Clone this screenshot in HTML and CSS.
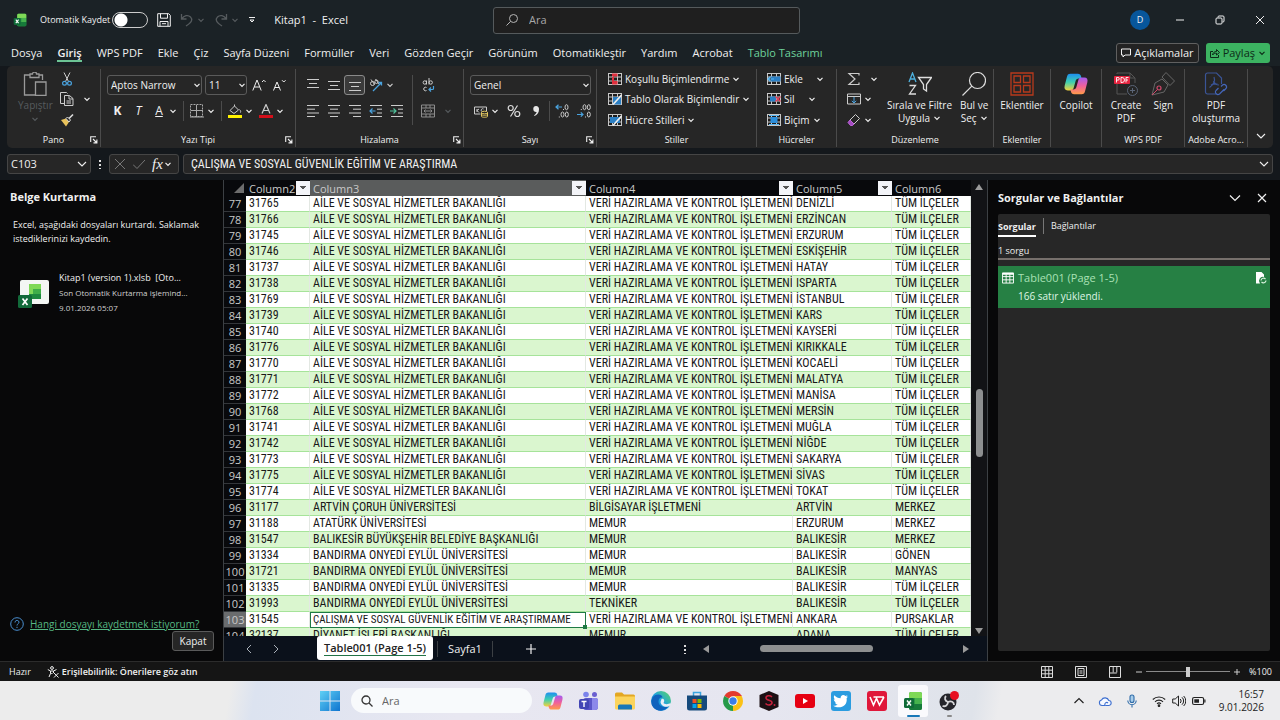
FILE: index.html
```html
<!DOCTYPE html>
<html lang="tr">
<head>
<meta charset="utf-8">
<title>Kitap1 - Excel</title>
<meta name="viewport" content="width=device-width, initial-scale=1">
<link rel="stylesheet" href="styles.css">
</head>
<body>
<svg class="defs" aria-hidden="true">
  <defs>
    <linearGradient id="cpA" x1="0" y1="0" x2="0" y2="1"><stop offset="0" stop-color="#1e8ff0"/><stop offset=".5" stop-color="#3ecfb0"/><stop offset="1" stop-color="#f3d33c"/></linearGradient>
    <linearGradient id="cpB" x1="0" y1="0" x2="0" y2="1"><stop offset="0" stop-color="#a45cf0"/><stop offset=".5" stop-color="#f0609c"/><stop offset="1" stop-color="#ff9a4a"/></linearGradient>
    <linearGradient id="winG" x1="0" y1="0" x2="1" y2="1"><stop offset="0" stop-color="#5fd0f5"/><stop offset="1" stop-color="#0f74cf"/></linearGradient>
    <linearGradient id="edgeG" x1="0" y1="1" x2="1" y2="0"><stop offset="0" stop-color="#0b5cb8"/><stop offset=".5" stop-color="#1fa3e0"/><stop offset="1" stop-color="#5fd95c"/></linearGradient>
    <symbol id="chev" viewBox="0 0 8 8"><path d="M1.500 2.800 4 5.300 6.500 2.800" fill="none" stroke="currentColor" stroke-width="1.200"/></symbol>
    <symbol id="chev-l" viewBox="0 0 12 12"><path d="M2 4l4 4 4-4" fill="none" stroke="currentColor" stroke-width="1.100"/></symbol>
    <symbol id="launch" viewBox="0 0 8 8"><path d="M.7 6V.7H6M3 3l3.500 3.500M6.900 3.500v3.400H3.500" fill="none" stroke="currentColor" stroke-width="1.100"/></symbol>
    <symbol id="xl" viewBox="0 0 20 20"><rect x="6" y="1" width="13" height="18" rx="2" fill="#2c9a45"/><path d="M8 1h9a2 2 0 0 1 2 2v4H6V3a2 2 0 0 1 2-2z" fill="#7fd957"/><path d="M12 7h7v6h-7z" fill="#46b34d"/><path d="M6 13h13v4a2 2 0 0 1-2 2H8a2 2 0 0 1-2-2z" fill="#177a3a"/><rect x="1" y="7" width="10" height="10" rx="1.500" fill="#0f6b38"/><path d="M4 9.500l4 5M8 9.500l-4 5" stroke="#fff" stroke-width="1.500"/></symbol>
    <symbol id="copilot" viewBox="0 0 26 26"><path d="M7 2h8c2 0 3 1 3.500 3l.5 2h-3c-2 0-3 1-3.500 3l-2 7c-.5 2-1.500 3-3.500 3H4c-3 0-4-2-3.300-5L3 6c.7-3 1.500-4 4-4z" fill="url(#cpA)"/><path d="M19 24h-8c-2 0-3-1-3.500-3L7 19h3c2 0 3-1 3.500-3l2-7c.5-2 1.500-3 3.500-3h3c3 0 4 2 3.300 5L23 20c-.7 3-1.500 4-4 4z" fill="url(#cpB)"/></symbol>
    <symbol id="table3" viewBox="0 0 14 12"><rect x=".5" y=".5" width="13" height="11" fill="#1d1d1d" stroke="#c8c8c8"/><path d="M.5 4h13M.5 8h13M4.500.5v11M9.500.5v11" stroke="#c8c8c8"/></symbol>
    <symbol id="lines-c" viewBox="0 0 14 14"><path d="M1 1.500h12M3 5.200h8M1 9h12M3 12.500h8" stroke="currentColor"/></symbol>
  </defs>
</svg>

<header class="titlebar">
  <div class="title-left">
    <svg class="i14" viewBox="0 0 20 20"><use href="#xl"/></svg>
    <label class="autosave">Otomatik Kaydet <input type="checkbox" role="switch"></label>
    <button class="ib save" aria-label="Kaydet"><svg class="i14" viewBox="0 0 14 14" fill="none" stroke="currentColor"><path d="M.7.7h11l1.600 1.600v11H.7zM3.500.7v4.500h7V.7M3 13.300V8.500h8v4.800M5 10.700h4"/></svg></button>
    <button class="ib dim" aria-label="Geri Al"><svg class="i14" viewBox="0 0 14 14" fill="none" stroke="currentColor" stroke-width="1.300"><path d="M1.500 1v5h5M1.800 5.800C4 2.500 8 1.500 10.500 4s1.500 5-4.500 9"/></svg><svg class="chev"><use href="#chev"/></svg></button>
    <button class="ib dim" aria-label="Yinele"><svg class="i14" viewBox="0 0 14 14" fill="none" stroke="currentColor" stroke-width="1.300"><path d="M12.500 1v5h-5M12.200 5.800C10 2.500 6 1.500 3.500 4s-1.500 5 4.500 9"/></svg><svg class="chev"><use href="#chev"/></svg></button>
    <button class="ib qat" aria-label="Araç çubuğunu özelleştir"><svg class="chev" viewBox="0 0 8 8" fill="none" stroke="currentColor"><path d="M1 1.500h6M2 4l2 2 2-2z"/></svg></button>
    <span class="doc">Kitap1&nbsp; -&nbsp; Excel</span>
  </div>
  <label class="search"><svg class="i14" viewBox="0 0 14 14" fill="none" stroke="currentColor"><circle cx="8.500" cy="5.500" r="4"/><path d="M5.500 8.500 1.500 12.500"/></svg><input type="text" placeholder="Ara" aria-label="Ara"></label>
  <div class="title-right">
    <button class="avatar">D</button>
    <button class="win" aria-label="Simge durumuna küçült"><svg class="i10" viewBox="0 0 10 10"><path d="M1 5h8" stroke="currentColor"/></svg></button>
    <button class="win" aria-label="Önceki boyut"><svg class="i10" viewBox="0 0 10 10" fill="none" stroke="currentColor"><rect x="1" y="3" width="6" height="6" rx="1"/><path d="M3 2.500V2a1 1 0 0 1 1-1h4a1 1 0 0 1 1 1v4a1 1 0 0 1-1 1h-.5"/></svg></button>
    <button class="win" aria-label="Kapat"><svg class="i10" viewBox="0 0 10 10"><path d="M1 1l8 8M9 1 1 9" stroke="currentColor"/></svg></button>
  </div>
</header>

<nav class="tabs">
  <button>Dosya</button><button class="on">Giriş</button><button>WPS PDF</button><button>Ekle</button><button>Çiz</button><button>Sayfa Düzeni</button><button>Formüller</button><button>Veri</button><button>Gözden Geçir</button><button>Görünüm</button><button>Otomatikleştir</button><button>Yardım</button><button>Acrobat</button><button class="ctx">Tablo Tasarımı</button>
  <span class="grow"></span>
  <button class="comments"><svg class="i10" viewBox="0 0 10 10" fill="none" stroke="currentColor"><path d="M.5 1h9v6H4L2 9V7H.5z"/></svg>Açıklamalar</button>
  <button class="share"><svg class="i10" viewBox="0 0 10 10" fill="none" stroke="currentColor"><path d="M3 3.500H.5v6h8V7M2.500 7C3 4.500 4.500 3.500 6.500 3.500V1.500L9.500 4.500 6.500 7V5.200C5 5.200 3.500 5.500 2.500 7z"/></svg>Paylaş<svg class="chev"><use href="#chev"/></svg></button>
</nav>

<section class="ribbon" aria-label="Şerit">
  <div class="group">
    <div class="body clip">
      <button class="big dim"><svg class="i24" viewBox="0 0 24 24" fill="none" stroke="#9a9a9a" stroke-width="1.300"><path d="M7 3H1.500v20H12M16 3h3.500v5M7 5.500V2h2.500a2 2 0 0 1 4 0H16v3.500zM12.500 10h10.500v13.500H12.500z"/></svg><span>Yapıştır</span><svg class="chev"><use href="#chev"/></svg></button>
      <div class="rows3">
        <button class="ib" aria-label="Kes"><svg class="i14" viewBox="0 0 14 14" fill="none"><path d="M4 .5l4.500 9M10 .5l-4.500 9" stroke="#ccc"/><circle cx="4.500" cy="11.200" r="1.900" stroke="#4aa3df" stroke-width="1.200"/><circle cx="9.500" cy="11.200" r="1.900" stroke="#4aa3df" stroke-width="1.200"/></svg></button>
        <button class="ib" aria-label="Kopyala"><svg class="i14" viewBox="0 0 14 14" fill="none" stroke="#ccc"><path d="M4.500 11.500h-4V.5h6l1 1M4.500 3.500h5L13 6.500v7H4.500zM9 3.500v3.500h4M6.500 9h4.500M6.500 11h4.500"/></svg><svg class="chev gap6"><use href="#chev"/></svg></button>
        <button class="ib" aria-label="Biçim Boyacısı"><svg class="i14" viewBox="0 0 14 14"><path d="M1 7l5-1.500L9 9l-3 4.500z" fill="#e8c25c"/><path d="M6 5.500 7.500 4 10.500 7 9 9z" fill="#262626" stroke="#ddd"/><path d="M9 5.500 13 1.500" stroke="#ddd" stroke-width="1.600"/></svg></button>
      </div>
    </div>
    <div class="cap"><span>Pano</span><button aria-label="Pano ayarları"><svg class="chev"><use href="#launch"/></svg></button></div>
  </div>

  <div class="group">
    <div class="body rows2">
      <div class="line">
        <span class="sel w94"><select aria-label="Yazı tipi"><option>Aptos Narrow</option></select><svg class="chev"><use href="#chev"/></svg></span>
        <span class="sel w42"><select aria-label="Yazı boyutu"><option>11</option></select><svg class="chev"><use href="#chev"/></svg></span>
        <button class="ib ml" aria-label="Yazı tipini büyüt"><svg class="i14" viewBox="0 0 14 14" fill="none" stroke="currentColor"><path d="M.8 12.500 5 2l4.200 10.500M2.300 9h5.400M10 4l1.800-1.800L13.600 4"/></svg></button>
        <button class="ib ml" aria-label="Yazı tipini küçült"><svg class="i14" viewBox="0 0 14 14" fill="none" stroke="currentColor"><path d="M1.500 12.500 5 4l3.500 8.500M2.800 9.500h4.400M10 2.200 11.800 4l1.800-1.800"/></svg></button>
      </div>
      <div class="line fmt">
        <button class="ib b" aria-label="Kalın">K</button><button class="ib it" aria-label="İtalik">T</button>
        <button class="ib"><span class="u">A</span><svg class="chev"><use href="#chev"/></svg></button><i class="sep"></i>
        <button class="ib" aria-label="Kenarlıklar"><svg class="i14" viewBox="0 0 14 14" fill="none" stroke="#aaa"><rect x=".5" y=".5" width="12" height="12" stroke-dasharray="2 1"/><path d="M6.500 1v12M1 6.500h12M0 13h14"/></svg><svg class="chev"><use href="#chev"/></svg></button><i class="sep"></i>
        <button class="ib" aria-label="Dolgu rengi"><svg class="i14" viewBox="0 0 14 14"><path d="M2 6.500 6.500 2l4 4L6 9.500zM6.500 2V.5M11.500 5.500c1.500 1.500 1.500 3 .5 3" fill="none" stroke="#ccc"/><path d="M0 11h14v3H0z" fill="#fff200"/></svg><svg class="chev"><use href="#chev"/></svg></button>
        <button class="ib" aria-label="Yazı rengi"><svg class="i14" viewBox="0 0 14 14"><path d="M3 9.500 7 .5l4 9M4.300 6.500h5.400" fill="none" stroke="#ccc" stroke-width="1.200"/><path d="M0 11h14v3H0z" fill="#d40f1a"/></svg><svg class="chev"><use href="#chev"/></svg></button>
      </div>
    </div>
    <div class="cap"><span>Yazı Tipi</span><button aria-label="Yazı tipi ayarları"><svg class="chev"><use href="#launch"/></svg></button></div>
  </div>

  <div class="group">
    <div class="body halign">
      <div class="rows2">
        <div class="line al">
          <button class="ib" aria-label="Üste hizala"><svg class="i14" viewBox="0 0 14 14"><path d="M1 1.500h12M3 5.500h8M1 9.500h12" stroke="#ccc"/></svg></button>
          <button class="ib" aria-label="Ortaya hizala"><svg class="i14" viewBox="0 0 14 14"><path d="M1 3.500h12M3 7.500h8M1 11.500h12" stroke="#ccc"/></svg></button>
          <button class="ib pressed" aria-label="Alta hizala"><svg class="i14" viewBox="0 0 14 14"><path d="M1 4.500h12M3 8.500h8M1 12.500h12" stroke="#ccc"/></svg></button>
          <button class="ib" aria-label="Yönlendirme"><svg class="i14" viewBox="0 0 14 14" fill="none"><circle cx="3.500" cy="5.500" r="2" stroke="#ccc"/><path d="M2 1.500l3.500 5M6.500 1 10 6" stroke="#ccc"/><circle cx="7.500" cy="3.800" r="1.700" stroke="#ccc"/><path d="M4 13 12.500 4.500M9.500 4.500h3v3" stroke="#4aa3df" stroke-width="1.300"/></svg><svg class="chev"><use href="#chev"/></svg></button>
        </div>
        <div class="line al">
          <button class="ib" aria-label="Sola hizala"><svg class="i14" viewBox="0 0 14 14"><path d="M1 1.500h12M1 5.200h8M1 9h12M1 12.500h8" stroke="#ccc"/></svg></button>
          <button class="ib" aria-label="Ortala"><svg class="i14"><use href="#lines-c"/></svg></button>
          <button class="ib" aria-label="Sağa hizala"><svg class="i14" viewBox="0 0 14 14"><path d="M1 1.500h12M5 5.200h8M1 9h12M5 12.500h8" stroke="#ccc"/></svg></button>
          <button class="ib" aria-label="Girintiyi azalt"><svg class="i14" viewBox="0 0 14 14" fill="none"><path d="M1 1.500h12M8 5.200h5M8 9h5M1 12.500h12" stroke="#ccc"/><path d="M6.500 7H1M3.500 4.500 1 7l2.500 2.500" stroke="#4aa3df" stroke-width="1.200"/></svg></button>
          <button class="ib" aria-label="Girintiyi artır"><svg class="i14" viewBox="0 0 14 14" fill="none"><path d="M1 1.500h12M8 5.200h5M8 9h5M1 12.500h12" stroke="#ccc"/><path d="M0 7h6M3.500 4.500 6 7 3.500 9.500" stroke="#4fc09a" stroke-width="1.200"/></svg></button>
        </div>
      </div>
      <i class="sep tall"></i>
      <div class="rows2">
        <button class="ib" aria-label="Metni kaydır"><svg class="i14" viewBox="0 0 14 14" fill="none" stroke="#ccc"><circle cx="3.800" cy="4.500" r="1.700"/><path d="M5.500 2.500v4M8 0v6.500"/><circle cx="9.700" cy="4.500" r="1.700"/><path d="M5.500 9.500a1.800 1.800 0 1 0 0 3"/><path d="M12.500 8v2.500a1 1 0 0 1-1 1H8M10 9.500l-2 2 2 2" stroke="#4aa3df" stroke-width="1.200"/></svg></button>
        <button class="ib" aria-label="Birleştir ve ortala"><svg class="i14" viewBox="0 0 14 14" fill="none" stroke="#8c8c8c"><path d="M.5 1h13v12H.5zM.5 4h13M.5 10h13M5 1v3M9 1v3M5 10v3M9 10v3M3 7h8M4.500 5.500 3 7l1.500 1.500M9.500 5.500 11 7 9.500 8.500"/></svg><svg class="chev dim gap6"><use href="#chev"/></svg></button>
      </div>
    </div>
    <div class="cap"><span>Hizalama</span><button aria-label="Hizalama ayarları"><svg class="chev"><use href="#launch"/></svg></button></div>
  </div>

  <div class="group">
    <div class="body rows2">
      <div class="line"><span class="sel wide"><select aria-label="Sayı biçimi"><option>Genel</option></select><svg class="chev"><use href="#chev"/></svg></span></div>
      <div class="line num">
        <button class="ib" aria-label="Muhasebe biçimi"><svg class="i14" viewBox="0 0 14 14" fill="none"><path d="M.5 3h12v4M.5 3v7h6M3 5v3M3 6.500 5 5M3 6.500 5 8.500M9.500 5a1.500 1.500 0 1 0 0 2.500" stroke="#ccc"/><ellipse cx="10.500" cy="8.500" rx="3" ry="1.300" fill="#262626" stroke="#e3c860"/><path d="M7.500 8.500v4c0 1 6 1 6 0v-4M7.500 10.500c0 1 6 1 6 0" stroke="#e3c860"/></svg><svg class="chev"><use href="#chev"/></svg></button>
        <button class="ib" aria-label="Yüzde"><svg class="i14" viewBox="0 0 14 14" fill="none" stroke="#ddd" stroke-width="1.200"><circle cx="3.700" cy="4" r="2.500"/><circle cx="10.300" cy="10" r="2.500"/><path d="M10.500 1.500l-7 11"/></svg></button>
        <button class="ib" aria-label="Binlik ayırıcı"><svg class="i14" viewBox="0 0 14 14"><path d="M7 2a3 3 0 0 1 3 3.500c0 3-1.800 5.500-4.500 6.500l-.4-.8C6.700 10.200 7.500 9 7.600 8A3 3 0 1 1 7 2z" fill="#e6e6e6"/></svg></button><i class="sep"></i>
        <button class="ib" aria-label="Ondalık artır"><svg class="i14" viewBox="0 0 14 14" fill="none" stroke="#ccc"><ellipse cx="11.500" cy="3.200" rx="1.500" ry="2.500"/><ellipse cx="7.500" cy="10.500" rx="1.500" ry="2.500"/><ellipse cx="11.800" cy="10.500" rx="1.500" ry="2.500"/><path d="M4.300 12.500v1M8.500 5v1"/><path d="M7 3H1M3.500.8 1 3l2.500 2.200" stroke="#4aa3df" stroke-width="1.200"/></svg></button>
        <button class="ib" aria-label="Ondalık azalt"><svg class="i14" viewBox="0 0 14 14" fill="none" stroke="#ccc"><ellipse cx="7.500" cy="3.200" rx="1.500" ry="2.500"/><ellipse cx="11.800" cy="3.200" rx="1.500" ry="2.500"/><ellipse cx="11.800" cy="10.500" rx="1.500" ry="2.500"/><path d="M4.300 5v1M8.500 12.500v1"/><path d="M0 10.500h6M3.800 8.300 6 10.500 3.800 12.700" stroke="#4aa3df" stroke-width="1.200"/></svg></button>
      </div>
    </div>
    <div class="cap"><span>Sayı</span><button aria-label="Sayı ayarları"><svg class="chev"><use href="#launch"/></svg></button></div>
  </div>

  <div class="group">
    <div class="body rows3 pad11">
      <button class="row"><svg class="i14" viewBox="0 0 14 12"><use href="#table3"/><path d="M4 .5h5.500v3H4zM4 8h5.500v3.500H4zM4 4h2v4H4z" fill="#e0303e"/></svg>Koşullu Biçimlendirme<svg class="chev"><use href="#chev"/></svg></button>
      <button class="row"><svg class="i14" viewBox="0 0 14 12"><use href="#table3"/><path d="M5 4h8v7.500H5z" fill="#2b7fc4"/><path d="M5 11.500 13.500 2" stroke="#eee" stroke-width="1.600"/></svg>Tablo Olarak Biçimlendir<svg class="chev"><use href="#chev"/></svg></button>
      <button class="row"><svg class="i14" viewBox="0 0 14 12"><use href="#table3"/><path d="M2 3h10v6H2z" fill="#2b7fc4"/><path d="M5 11.500 13.500 2" stroke="#eee" stroke-width="1.600"/></svg>Hücre Stilleri<svg class="chev"><use href="#chev"/></svg></button>
    </div>
    <div class="cap"><span>Stiller</span></div>
  </div>

  <div class="group">
    <div class="body rows3 pad10">
      <button class="row"><svg class="i14" viewBox="0 0 14 12"><use href="#table3"/><path d="M4 3.500h9.500v5H4z" fill="#2b7fc4"/><path d="M7 6H1M3.500 3.500 1 6l2.500 2.500" fill="none" stroke="#5db9f5" stroke-width="1.200"/></svg>Ekle<svg class="chev gap10"><use href="#chev"/></svg></button>
      <button class="row"><svg class="i14" viewBox="0 0 14 12"><use href="#table3"/><path d="M3 3.500h6v5H3z" fill="#2b7fc4"/><path d="M8.500 3.500l5 5M13.500 3.500l-5 5" stroke="#e0405a" stroke-width="1.500"/></svg>Sil<svg class="chev gap10"><use href="#chev"/></svg></button>
      <button class="row"><svg class="i14" viewBox="0 0 14 12"><use href="#table3"/><path d="M3.500 3h7v6h-7z" fill="#2b8fdc"/><path d="M2 1.500h10M2 10.500h10" stroke="#5db9f5"/></svg>Biçim<svg class="chev"><use href="#chev"/></svg></button>
    </div>
    <div class="cap"><span>Hücreler</span></div>
  </div>

  <div class="group">
    <div class="body edit">
      <div class="rows3">
        <button class="ib" aria-label="Otomatik Toplam"><svg class="i14" viewBox="0 0 14 14" fill="none" stroke="#ccc" stroke-width="1.200"><path d="M12 3.500V1.500H2L8 7l-6 5.500h10v-2"/></svg><svg class="chev gap6"><use href="#chev"/></svg></button>
        <button class="ib" aria-label="Doldur"><svg class="i14" viewBox="0 0 14 14" fill="none" stroke="#ccc"><path d="M.5 2h13v10H.5zM.5 4.500h13"/><path d="M7 5v6M4.800 8.800 7 11l2.200-2.200" stroke="#4aa3df"/></svg><svg class="chev"><use href="#chev"/></svg></button>
        <button class="ib" aria-label="Temizle"><svg class="i14" viewBox="0 0 14 14" fill="none"><path d="M8.500 1.500 12.500 5.500 7 11 3 7z" stroke="#ccc"/><path d="M3 7l4 4-1.500 1.500h-2L1 9.500z" fill="#a34bc0" stroke="#c065dc"/></svg><svg class="chev"><use href="#chev"/></svg></button>
      </div>
      <button class="big"><svg class="i24" viewBox="0 0 24 24" fill="none"><path d="M1 10 4.500 1 8 10M2.200 7h4.600" stroke="#4db0dd" stroke-width="1.300"/><path d="M1.500 13.500h6L1.500 22h6.500M10.500 5.500h13l-5 7v6.500L15.500 17v-4.500z" stroke="#ddd" stroke-width="1.300"/></svg><span>Sırala ve Filtre<br>Uygula<svg class="chev"><use href="#chev"/></svg></span></button>
      <button class="big"><svg class="i24" viewBox="0 0 24 24" fill="none" stroke="#ddd" stroke-width="1.200"><circle cx="15.500" cy="8.500" r="8"/><path d="M9.800 14.200.5 23.500"/></svg><span>Bul ve<br>Seç<svg class="chev"><use href="#chev"/></svg></span></button>
    </div>
    <div class="cap"><span>Düzenleme</span></div>
  </div>

  <div class="group">
    <div class="body center"><button class="big"><svg class="i24" viewBox="0 0 24 24" fill="none" stroke="#b83a1c" stroke-width="1.300"><path d="M1 1h22v22H1zM4 4h6.500v6.500H4zM13.500 4H20v6.500h-6.500zM4 13.500h6.500V20H4zM13.500 13.500H20V20h-6.500z"/></svg><span>Eklentiler</span></button></div>
    <div class="cap"><span>Eklentiler</span></div>
  </div>

  <div class="group">
    <div class="body center"><button class="big"><svg class="i24" viewBox="0 0 26 26"><use href="#copilot"/></svg><span>Copilot</span></button></div>
    <div class="cap"></div>
  </div>

  <div class="group">
    <div class="body center">
      <button class="big"><svg class="i24" viewBox="0 0 24 24" fill="none"><path d="M3 2V1h13l5 5v5M3 12v10h10M16 1v5h5" stroke="#555"/><circle cx="18.500" cy="18.500" r="5" stroke="#5a6577"/><path d="M18.500 16v5M16 18.500h5" stroke="#5a6577"/><rect x="0" y="4" width="16" height="8" rx="1" fill="#e5243f"/><path d="M2.500 10.500v-5h1.500a1.300 1.300 0 0 1 0 2.600H2.500M7 5.500v5h1a2 2 0 0 0 0-5zM12 10.500v-5h2.500M12 8h2" stroke="#fff" stroke-width=".9"/></svg><span>Create<br>PDF</span></button>
      <button class="big"><svg class="i24" viewBox="0 0 24 24" fill="none" stroke="#666"><path d="M1 23 4 11l7-4 6 6-4 7zM11 5l4-4.500L23.500 9 19 13.500zM1 23l6-6"/><circle cx="8" cy="16" r="2" stroke="#d0486a" stroke-width="1.200"/><path d="M6.500 17.500 1 23" stroke="#d0486a"/></svg><span>Sign</span></button>
    </div>
    <div class="cap"><span>WPS PDF</span></div>
  </div>

  <div class="group">
    <div class="body center"><button class="big"><svg class="i24" viewBox="0 0 24 24" fill="none" stroke="#3a5496" stroke-width="1.200"><path d="M12 22H3.500a2 2 0 0 1-2-2V3a2 2 0 0 1 2-2h9l5 5v6M10 5c1.500 4-1 8-4.500 10.500M9.500 9c1 2.500 3 4 5.500 4M7 13c2-1 4-1.500 6.500-1"/><path d="M17 14.500l1.500-1.500a2.500 2.500 0 0 1 3.500 3.500L19.500 19M20 17.500l-4.500 4.500a2.500 2.500 0 0 1-3.500-3.500l2.500-2.500" stroke="#4466ba"/></svg><span>PDF<br>oluşturma</span></button></div>
    <div class="cap"><span>Adobe Acro...</span></div>
  </div>
  <div class="collapse"><button class="ib" aria-label="Şeridi daralt"><svg class="i12"><use href="#chev-l"/></svg></button></div>
</section>

<section class="formula">
  <label class="namebox"><input type="text" value="C103" aria-label="Ad kutusu"><svg class="i12"><use href="#chev-l"/></svg></label>
  <span class="dots" aria-hidden="true"></span>
  <div class="fxbox">
    <button class="ib" aria-label="İptal"><svg class="i12" viewBox="0 0 12 12"><path d="M1 1l10 10M11 1 1 11" stroke="#777"/></svg></button>
    <button class="ib" aria-label="Gir"><svg class="i12" viewBox="0 0 12 12"><path d="M0 6.500 4 10.500 12 2" fill="none" stroke="#777"/></svg></button>
    <button class="ib fx">fx<svg class="chev"><use href="#chev"/></svg></button>
  </div>
  <label class="fin"><input type="text" aria-label="Formül çubuğu" value="ÇALIŞMA VE SOSYAL GÜVENLİK EĞİTİM VE ARAŞTIRMA"><svg class="i12"><use href="#chev-l"/></svg></label>
</section>

<main class="work">
  <aside class="recovery">
    <h2>Belge Kurtarma</h2>
    <p>Excel, aşağıdaki dosyaları kurtardı. Saklamak istediklerinizi kaydedin.</p>
    <div class="file">
      <svg class="i32" viewBox="0 0 32 32"><rect x="2" y="3" width="29" height="24" rx="2" fill="#f4f6f4"/><rect x="11" y="7" width="12" height="15" rx="1" fill="#3fae49"/><path d="M11 7h12v5h-8v5h-4z" fill="#7fd957"/><path d="M11 17h12v5H11z" fill="#1e8a3f"/><rect x="0" y="18" width="14" height="13" rx="1.500" fill="#126a3a"/><path d="M4.500 21.500l5 6.500M9.500 21.500l-5 6.500" stroke="#fff" stroke-width="1.700"/></svg>
      <div><div class="fn">Kitap1 (version 1).xlsb&nbsp; [Oto...</div><div class="fs">Son Otomatik Kurtarma işlemind...</div><div class="fs">9.01.2026 05:07</div></div>
    </div>
    <div class="grow"></div>
    <div class="which"><svg class="i14" viewBox="0 0 14 14" fill="none" stroke="#4a8fd0"><circle cx="7" cy="7" r="6.300"/><path d="M5 5.500c0-3 4-2.500 4-.3C9 6.800 7 6.800 7 8.500M7 9.800v1.200"/></svg><a href="#">Hangi dosyayı kaydetmek istiyorum?</a></div>
    <button class="closebtn">Kapat</button>
  </aside>

  <section class="sheet">
    <div class="gridwrap">
      <div class="cells">
      <table>
        <colgroup><col class="c0"><col class="c2"><col class="c3"><col class="c4"><col class="c5"><col></colgroup>
        <thead><tr><th class="corner"><svg viewBox="0 0 10 10"><path d="M10 0v10H0z" fill="#6d6d6d"/></svg></th><th><div>Column2<button aria-label="Filtre"></button></div></th><th class="cur"><div>Column3<button aria-label="Filtre"></button></div></th><th><div>Column4<button aria-label="Filtre"></button></div></th><th><div>Column5<button aria-label="Filtre"></button></div></th><th><div>Column6</div></th></tr></thead>
        <tbody>
<tr><th>77</th><td>31765</td><td>AİLE VE SOSYAL HİZMETLER BAKANLIĞI</td><td>VERİ HAZIRLAMA VE KONTROL İŞLETMENİ</td><td>DENİZLİ</td><td>TÜM İLÇELER</td></tr>
<tr><th>78</th><td>31766</td><td>AİLE VE SOSYAL HİZMETLER BAKANLIĞI</td><td>VERİ HAZIRLAMA VE KONTROL İŞLETMENİ</td><td>ERZİNCAN</td><td>TÜM İLÇELER</td></tr>
<tr><th>79</th><td>31745</td><td>AİLE VE SOSYAL HİZMETLER BAKANLIĞI</td><td>VERİ HAZIRLAMA VE KONTROL İŞLETMENİ</td><td>ERZURUM</td><td>TÜM İLÇELER</td></tr>
<tr><th>80</th><td>31746</td><td>AİLE VE SOSYAL HİZMETLER BAKANLIĞI</td><td>VERİ HAZIRLAMA VE KONTROL İŞLETMENİ</td><td>ESKİŞEHİR</td><td>TÜM İLÇELER</td></tr>
<tr><th>81</th><td>31737</td><td>AİLE VE SOSYAL HİZMETLER BAKANLIĞI</td><td>VERİ HAZIRLAMA VE KONTROL İŞLETMENİ</td><td>HATAY</td><td>TÜM İLÇELER</td></tr>
<tr><th>82</th><td>31738</td><td>AİLE VE SOSYAL HİZMETLER BAKANLIĞI</td><td>VERİ HAZIRLAMA VE KONTROL İŞLETMENİ</td><td>ISPARTA</td><td>TÜM İLÇELER</td></tr>
<tr><th>83</th><td>31769</td><td>AİLE VE SOSYAL HİZMETLER BAKANLIĞI</td><td>VERİ HAZIRLAMA VE KONTROL İŞLETMENİ</td><td>İSTANBUL</td><td>TÜM İLÇELER</td></tr>
<tr><th>84</th><td>31739</td><td>AİLE VE SOSYAL HİZMETLER BAKANLIĞI</td><td>VERİ HAZIRLAMA VE KONTROL İŞLETMENİ</td><td>KARS</td><td>TÜM İLÇELER</td></tr>
<tr><th>85</th><td>31740</td><td>AİLE VE SOSYAL HİZMETLER BAKANLIĞI</td><td>VERİ HAZIRLAMA VE KONTROL İŞLETMENİ</td><td>KAYSERİ</td><td>TÜM İLÇELER</td></tr>
<tr><th>86</th><td>31776</td><td>AİLE VE SOSYAL HİZMETLER BAKANLIĞI</td><td>VERİ HAZIRLAMA VE KONTROL İŞLETMENİ</td><td>KIRIKKALE</td><td>TÜM İLÇELER</td></tr>
<tr><th>87</th><td>31770</td><td>AİLE VE SOSYAL HİZMETLER BAKANLIĞI</td><td>VERİ HAZIRLAMA VE KONTROL İŞLETMENİ</td><td>KOCAELİ</td><td>TÜM İLÇELER</td></tr>
<tr><th>88</th><td>31771</td><td>AİLE VE SOSYAL HİZMETLER BAKANLIĞI</td><td>VERİ HAZIRLAMA VE KONTROL İŞLETMENİ</td><td>MALATYA</td><td>TÜM İLÇELER</td></tr>
<tr><th>89</th><td>31772</td><td>AİLE VE SOSYAL HİZMETLER BAKANLIĞI</td><td>VERİ HAZIRLAMA VE KONTROL İŞLETMENİ</td><td>MANİSA</td><td>TÜM İLÇELER</td></tr>
<tr><th>90</th><td>31768</td><td>AİLE VE SOSYAL HİZMETLER BAKANLIĞI</td><td>VERİ HAZIRLAMA VE KONTROL İŞLETMENİ</td><td>MERSİN</td><td>TÜM İLÇELER</td></tr>
<tr><th>91</th><td>31741</td><td>AİLE VE SOSYAL HİZMETLER BAKANLIĞI</td><td>VERİ HAZIRLAMA VE KONTROL İŞLETMENİ</td><td>MUĞLA</td><td>TÜM İLÇELER</td></tr>
<tr><th>92</th><td>31742</td><td>AİLE VE SOSYAL HİZMETLER BAKANLIĞI</td><td>VERİ HAZIRLAMA VE KONTROL İŞLETMENİ</td><td>NİĞDE</td><td>TÜM İLÇELER</td></tr>
<tr><th>93</th><td>31773</td><td>AİLE VE SOSYAL HİZMETLER BAKANLIĞI</td><td>VERİ HAZIRLAMA VE KONTROL İŞLETMENİ</td><td>SAKARYA</td><td>TÜM İLÇELER</td></tr>
<tr><th>94</th><td>31775</td><td>AİLE VE SOSYAL HİZMETLER BAKANLIĞI</td><td>VERİ HAZIRLAMA VE KONTROL İŞLETMENİ</td><td>SİVAS</td><td>TÜM İLÇELER</td></tr>
<tr><th>95</th><td>31774</td><td>AİLE VE SOSYAL HİZMETLER BAKANLIĞI</td><td>VERİ HAZIRLAMA VE KONTROL İŞLETMENİ</td><td>TOKAT</td><td>TÜM İLÇELER</td></tr>
<tr><th>96</th><td>31177</td><td>ARTVİN ÇORUH ÜNİVERSİTESİ</td><td>BİLGİSAYAR İŞLETMENİ</td><td>ARTVİN</td><td>MERKEZ</td></tr>
<tr><th>97</th><td>31188</td><td>ATATÜRK ÜNİVERSİTESİ</td><td>MEMUR</td><td>ERZURUM</td><td>MERKEZ</td></tr>
<tr><th>98</th><td>31547</td><td>BALIKESİR BÜYÜKŞEHİR BELEDİYE BAŞKANLIĞI</td><td>MEMUR</td><td>BALIKESİR</td><td>MERKEZ</td></tr>
<tr><th>99</th><td>31334</td><td>BANDIRMA ONYEDİ EYLÜL ÜNİVERSİTESİ</td><td>MEMUR</td><td>BALIKESİR</td><td>GÖNEN</td></tr>
<tr><th>100</th><td>31721</td><td>BANDIRMA ONYEDİ EYLÜL ÜNİVERSİTESİ</td><td>MEMUR</td><td>BALIKESİR</td><td>MANYAS</td></tr>
<tr><th>101</th><td>31335</td><td>BANDIRMA ONYEDİ EYLÜL ÜNİVERSİTESİ</td><td>MEMUR</td><td>BALIKESİR</td><td>TÜM İLÇELER</td></tr>
<tr><th>102</th><td>31993</td><td>BANDIRMA ONYEDİ EYLÜL ÜNİVERSİTESİ</td><td>TEKNİKER</td><td>BALIKESİR</td><td>TÜM İLÇELER</td></tr>
<tr class="active"><th>103</th><td>31545</td><td class="picked">ÇALIŞMA VE SOSYAL GÜVENLİK EĞİTİM VE ARAŞTIRMAME</td><td>VERİ HAZIRLAMA VE KONTROL İŞLETMENİ</td><td>ANKARA</td><td>PURSAKLAR</td></tr>
<tr><th>104</th><td>32137</td><td>DİYANET İŞLERİ BAŞKANLIĞI</td><td>MEMUR</td><td>ADANA</td><td>TÜM İLÇELER</td></tr>
        </tbody>
      </table>
      </div>
      <div class="vbar"><svg viewBox="0 0 8 6"><path d="M4 0l4 6H0z"/></svg><i></i><svg viewBox="0 0 8 6"><path d="M4 6 0 0h8z"/></svg></div>
    </div>
    <div class="sheettabs">
      <button class="nav" aria-label="Önceki sayfa"><svg class="i10" viewBox="0 0 10 10"><path d="M7 1 3 5l4 4" fill="none" stroke="currentColor"/></svg></button>
      <button class="nav" aria-label="Sonraki sayfa"><svg class="i10" viewBox="0 0 10 10"><path d="M3 1l4 4-4 4" fill="none" stroke="currentColor"/></svg></button>
      <button class="st on"><span>Table001 (Page 1-5)</span></button>
      <button class="st">Sayfa1</button>
      <button class="add" aria-label="Yeni sayfa"><svg class="i10" viewBox="0 0 10 10"><path d="M5 0v10M0 5h10" stroke="currentColor" stroke-width="1.200"/></svg></button>
      <span class="grow"></span>
      <span class="dots" aria-hidden="true"></span>
      <div class="hbar"><svg viewBox="0 0 6 8"><path d="M6 0v8L0 4z"/></svg><i></i><svg viewBox="0 0 6 8"><path d="M0 0v8l6-4z"/></svg></div>
    </div>
  </section>

  <aside class="queries">
    <header><h2>Sorgular ve Bağlantılar</h2><button class="ib" aria-label="Bölme seçenekleri"><svg class="i12" viewBox="0 0 12 12"><path d="M1 3.500l5 5 5-5" fill="none" stroke="currentColor" stroke-width="1.200"/></svg></button><button class="ib" aria-label="Bölmeyi kapat"><svg class="i10" viewBox="0 0 10 10"><path d="M1 1l8 8M9 1 1 9" stroke="currentColor" stroke-width="1.200"/></svg></button></header>
    <div class="qpanel">
      <div class="qtabs"><button class="on">Sorgular</button><button>Bağlantılar</button></div>
      <div class="count">1 sorgu</div>
      <div class="query">
        <svg class="i12" viewBox="0 0 13 12" fill="none" stroke="#fff"><path d="M.5.5h12v11H.5zM.5 4.500h12M.5 8h12M4.500 2v9.500M8.500 2v9.500"/><path d="M.5 1.500h12" stroke-width="2"/></svg>
        <div class="qn">Table001 (Page 1-5)</div>
        <svg class="i12" viewBox="0 0 12 12"><path d="M1 0h5.500L9 2.500V5a4 4 0 0 0-4 6.500H1z" fill="#fff"/><path d="M6 8.500a2.500 2.500 0 0 1 4.500-1.300M11 8.500a2.500 2.500 0 0 1-4.500 1.300" fill="none" stroke="#d9f2df" stroke-width="1.200"/></svg>
        <div class="qs">166 satır yüklendi.</div>
      </div>
    </div>
  </aside>
</main>

<footer class="status">
  <span>Hazır</span>
  <button class="acc"><svg class="i12" viewBox="0 0 12 12" fill="none" stroke="currentColor"><circle cx="5" cy="2" r="1.400"/><path d="M.8 3.500 3.500 5v2.500L2 11M9.500 3.500 6.500 5v2M3.500 5h3M3.500 8l1-1 1 1M7 7l4.500 4.500M11.500 7 7 11.500"/></svg>Erişilebilirlik: Önerilere göz atın</button>
  <span class="grow"></span>
  <button class="view" aria-label="Normal"><svg class="i12" viewBox="0 0 12 12" fill="none" stroke="currentColor"><path d="M.5.5h11v11H.5zM.5 4.200h11M.5 7.800h11M4.200.5v11M7.800.5v11"/></svg></button>
  <button class="view" aria-label="Sayfa düzeni"><svg class="i12" viewBox="0 0 12 12" fill="none" stroke="currentColor"><path d="M.5.5h11v11H.5zM3 2.500h6v7H3zM4.500 5h3M4.500 7h3"/></svg></button>
  <button class="view" aria-label="Sayfa sonu önizleme"><svg class="i12" viewBox="0 0 12 12" fill="none" stroke="currentColor"><path d="M.5.5h11v11H.5zM4.200.5v6M7.800.5v6M.5 7h7.300"/></svg></button>
  <div class="zoom"><button aria-label="Uzaklaştır"><svg class="i8" viewBox="0 0 8 8"><path d="M1 4h6" stroke="currentColor"/></svg></button><input type="range" min="0" max="100" value="50" aria-label="Yakınlaştırma"><button aria-label="Yakınlaştır"><svg class="i8" viewBox="0 0 8 8"><path d="M1 4h6M4 1v6" stroke="currentColor"/></svg></button></div>
  <span>%100</span>
</footer>

<footer class="taskbar">
  <div class="apps">
    <button aria-label="Başlat"><svg viewBox="0 0 20 20" fill="url(#winG)"><path d="M0 0h9.500v9.500H0zM10.500 0H20v9.500h-9.500zM0 10.500h9.500V20H0zM10.500 10.500H20V20h-9.500z"/></svg></button>
    <label class="tsearch"><svg class="i12" viewBox="0 0 12 12" fill="none" stroke="#333" stroke-width="1.300"><circle cx="5" cy="5" r="4"/><path d="M8 8l3.500 3.500"/></svg><input type="text" placeholder="Ara" aria-label="Windows'ta ara"></label>
    <button aria-label="Copilot"><svg viewBox="0 0 26 26"><use href="#copilot"/></svg></button>
    <button aria-label="Teams"><svg viewBox="0 0 20 20"><circle cx="7" cy="3.500" r="2.800" fill="#7b83eb"/><circle cx="15.500" cy="3.500" r="2.500" fill="#6a5fd0"/><rect x="4" y="7" width="15" height="12" rx="3" fill="#5a55c8"/><path d="M13 7h4a2 2 0 0 1 2 2v7a3 3 0 0 1-3 3h-3z" fill="#8c88ea"/><rect x="0" y="8" width="10" height="10" rx="2" fill="#4346b5"/><path d="M2.500 10.500h5M5 10.500V16" stroke="#fff" stroke-width="1.400"/></svg></button>
    <button aria-label="Dosya Gezgini"><svg viewBox="0 0 20 20"><path d="M0 3a1.500 1.500 0 0 1 1.500-1.500H7l2 2h9.500A1.500 1.500 0 0 1 20 5v5H0z" fill="#e3a723"/><path d="M0 5.500h20V17a1.500 1.500 0 0 1-1.500 1.500h-17A1.500 1.500 0 0 1 0 17z" fill="#fbd45c"/><path d="M3 18.500V15a1.500 1.500 0 0 1 1.500-1.500h11A1.500 1.500 0 0 1 17 15v3.500z" fill="#1878b8"/></svg></button>
    <button aria-label="Edge"><svg viewBox="0 0 20 20"><circle cx="10" cy="10" r="10" fill="url(#edgeG)"/><path d="M2 6c3-3.500 9-3 9.500.5-2-.5-4 1-4 4 0 4.500 5 7 10 4.500C15 20 7 21.500 2.500 16.500 0 13.500 0 9 2 6z" fill="#0f62bd"/><path d="M10.500 8c2.500-1 3.500 2 2 4 1 1.500 5 1.500 7 0l.5 2c-4 3.500-10 1.500-10.500-3z" fill="#eceef6"/></svg></button>
    <button aria-label="Microsoft Store"><svg viewBox="0 0 20 20"><path d="M6.500 5V1.500h7V5" fill="none" stroke="#3aa4e0" stroke-width="1.500"/><path d="M0 4.500h20V17a2.500 2.500 0 0 1-2.500 2.500h-15A2.500 2.500 0 0 1 0 17z" fill="#164a7c"/><path d="M5.500 8h4v4h-4z" fill="#f25022"/><path d="M10.500 8h4v4h-4z" fill="#7fba00"/><path d="M5.500 13h4v4h-4z" fill="#00a4ef"/><path d="M10.500 13h4v4h-4z" fill="#ffb900"/></svg></button>
    <button aria-label="Chrome"><svg viewBox="0 0 20 20"><path d="M10 10 1.340 5A10 10 0 0 1 18.660 5z" fill="#e33b2e"/><path d="M10 10 18.660 5A10 10 0 0 1 10 20z" fill="#fbc116"/><path d="M10 10v10A10 10 0 0 1 1.340 5z" fill="#269a48"/><path d="M10 5h8.660L14 12z" fill="#fbc116"/><path d="M10 5h8.660L18 4H8z" fill="#e33b2e"/><circle cx="10" cy="10" r="4.700" fill="#fff"/><circle cx="10" cy="10" r="3.700" fill="#3b7de8"/></svg></button>
    <button aria-label="Stake"><svg viewBox="0 0 20 20"><path d="M10 0l9.500 4v12L10 20 .5 16V4z" fill="#1c1014"/><path d="M13 6c-2-2-6-1.500-6 1s6 2 6 4.500-4 3.500-6.500 1" fill="none" stroke="#c5223c" stroke-width="1.600"/><circle cx="15.500" cy="14" r="1" fill="#c5223c"/></svg></button>
    <button aria-label="YouTube"><svg viewBox="0 0 20 20"><rect x="0" y="3" width="20" height="14" rx="3" fill="#e60012"/><path d="M8 7l5 3-5 3z" fill="#fff"/></svg></button>
    <button aria-label="Twitter"><svg viewBox="0 0 20 20"><rect width="20" height="20" rx="3" fill="#2a9ce0"/><path d="M17 5.500l-1.700.5 1.200-1.700-2 .8c-2.200-2.200-5.200-.6-4.900 2.200C7.200 7.200 5 6 3.400 4.200c-1.100 1.700-.5 3.400.8 4.400l-1.400-.4c0 1.600 1.100 2.700 2.500 3.200H3.900c.5 1.200 1.600 2 2.900 2.100-1.300 1-2.900 1.400-4.600 1.300C8.600 18.500 17 15.100 15.600 7.200z" fill="#fff"/></svg></button>
    <button aria-label="WPS Office"><svg viewBox="0 0 20 20"><rect width="20" height="20" rx="3" fill="#e0173a"/><path d="M3 6l3.500 8 3-6.500 3 6.500L17 6M6.500 6h10.500" fill="none" stroke="#fff" stroke-width="1.600"/></svg></button>
    <button class="running" aria-label="Excel"><svg viewBox="0 0 20 20"><use href="#xl"/></svg></button>
    <button class="idle" aria-label="OBS"><svg viewBox="0 0 20 20"><circle cx="9" cy="11" r="8.500" fill="#25252b"/><path d="M9 11c-3-1-4-4-2-6M9 11c3-1.500 6 0 6 3M9 11c0 3-2.500 5-5.500 4" fill="none" stroke="#d5d5d8" stroke-width="1.800"/><circle cx="15.500" cy="4.500" r="4.500" fill="#e81022"/></svg></button>
  </div>
  <div class="tray">
    <svg class="i12" viewBox="0 0 12 12"><path d="M1.500 8 6 3.500 10.500 8" fill="none" stroke="#222" stroke-width="1.200"/></svg>
    <svg class="i14" viewBox="0 0 14 14" fill="#f6f9ff" stroke="#3d6fd0" stroke-width="1.100"><path d="M4 11.500h6.500a2.500 2.500 0 0 0 .3-5A4 4 0 0 0 3.500 6 2.800 2.800 0 0 0 4 11.500z"/><path d="M7 11.500c-1-2 1.500-4 3-2.500"/></svg>
    <svg class="i14" viewBox="0 0 14 14" fill="none" stroke="#2c6aa8" stroke-width="1.100"><rect x="5" y="1" width="4" height="7.500" rx="2" fill="#a8cdea"/><path d="M2.800 6.500a4.200 4.200 0 0 0 8.400 0M7 10.800v2.700"/></svg>
    <span class="sys"><svg class="i14" viewBox="0 0 14 14" fill="none" stroke="#222" stroke-width="1.100"><path d="M.8 5.500a8.800 8.800 0 0 1 12.400 0M3 7.800a5.700 5.700 0 0 1 8 0M5 9.900a2.900 2.900 0 0 1 4 0"/><circle cx="7" cy="11.700" r=".8" fill="#222"/></svg><svg class="i14" viewBox="0 0 14 14" fill="none" stroke="#222"><path d="M.7 5h2.500L6.500 2v10L3.200 9H.7zM8.300 5a3 3 0 0 1 0 4M10 3.300a5 5 0 0 1 0 7.400M11.700 2a7 7 0 0 1 0 10"/></svg><svg class="i14" viewBox="0 0 14 14"><rect x=".6" y="3.500" width="11" height="7" rx="1.500" fill="none" stroke="#222" stroke-width="1.200"/><path d="M2.300 5.200H7v3.600H2.300zM12.300 5.500h1.200v3h-1.200z" fill="#222"/></svg></span>
    <time>16:57<br>9.01.2026</time>
  </div>
</footer>
</body>
</html>
```
FILE: styles.css
```css
* { box-sizing: border-box; }
html, body { height: 100%; }
body {
  margin: 0;
  display: flex;
  flex-direction: column;
  overflow: hidden;
  background: #14181c;
  color: #f0f0f0;
  font: 11px/14px "Open Sans", "Noto Sans", sans-serif;
}
button, input, select { font: inherit; color: inherit; background: none; border: 0; margin: 0; padding: 0; }
input { min-width: 0; outline: 0; }
h2, p { margin: 0; }
svg { display: block; flex: none; }
.defs { position: absolute; width: 0; height: 0; }
.grow { flex: 1; }
.i8 { width: 8px; height: 8px; }
.i10 { width: 10px; height: 10px; }
.i12 { width: 12px; height: 12px; }
.i14 { width: 14px; height: 14px; }
.i24 { width: 24px; height: 24px; }
.i32 { width: 32px; height: 32px; }
.chev { width: 8px; height: 8px; }
.gap6 { margin-left: 6px; }
.gap10 { margin-left: 10px; }
.dim { color: #565b5e; }
.ib { display: flex; align-items: center; justify-content: center; gap: 3px; }

/* title bar */
.titlebar { display: grid; grid-template-columns: 493fr 307fr 480fr; align-items: center; height: 40px; background: #1b2226; flex: none; }
.title-left { display: flex; align-items: center; padding-left: 13px; gap: 9px; white-space: nowrap; }
.autosave { display: flex; align-items: center; gap: 2px; font-size: 9px; margin-left: 4px; }
.autosave input { appearance: none; width: 36px; height: 16px; border: 1px solid #ccc; border-radius: 8px; background: radial-gradient(circle at 8px 7px, #fff 6px, transparent 7px); }
.doc { margin-left: 9px; }
.search { display: flex; align-items: center; gap: 10px; height: 27px; padding: 0 11px; border: 1px solid #555a5c; border-radius: 3px; background: #1f1f1f; color: #b5b5b5; }
.search input { flex: 1; }
.search input::placeholder { color: #a8a8a8; opacity: 1; }
.title-right { display: flex; justify-content: flex-end; align-items: center; }
.avatar { width: 20px; height: 20px; border-radius: 50%; background: #07569b; font-size: 9px; margin-right: 10px; }
.win { width: 40px; height: 40px; display: grid; place-items: center; }

/* ribbon tabs */
.tabs { display: flex; align-items: center; height: 26px; padding: 0 10px 0 11px; gap: 15px; background: #1a2125; flex: none; white-space: nowrap; }
.tabs .on { font-weight: 600; box-shadow: 0 2px #6cc495; }
.tabs .ctx { color: #6ed29c; }
.comments, .share { display: flex; align-items: center; gap: 3px; height: 20px; padding: 0 4px; border-radius: 3px; }
.comments { border: 1px solid #606060; background: #232323; }
.tabs .share { background: #3cb361; color: #0d2b18; margin-left: -8px; }

/* ribbon */
.ribbon {
  display: grid;
  grid-template-columns: 94fr 195fr 168fr 133fr 160fr 80fr 157fr 57fr 51fr 83fr 63fr 25fr;
  margin: 0 7px;
  height: 82px;
  padding: 3px 0 1px;
  background: #262626;
  border-radius: 5px;
  flex: none;
  font-size: 10px;
  white-space: nowrap;
}
.group { display: flex; flex-direction: column; border-right: 1px solid #4b4b4b; min-width: 0; }
.body { flex: 1; min-height: 0; }
.cap { height: 14px; display: grid; grid-template-columns: 1fr auto 1fr; align-items: center; font-size: 9px; }
.cap span { grid-column: 2; }
.cap button { grid-column: 3; justify-self: end; padding-right: 2px; }
.rows3 { display: flex; flex-direction: column; justify-content: space-around; align-items: flex-start; padding-bottom: 3px; }
.rows2 { display: flex; flex-direction: column; justify-content: space-between; padding: 5px 0 12px; }
.line { display: flex; align-items: center; height: 21px; }
.clip { display: flex; padding-left: 11px; gap: 7px; }
.big { display: flex; flex-direction: column; align-items: center; gap: 3px; padding-top: 3px; line-height: 13px; }
.big span .chev { display: inline-block; margin-left: 3px; }
.group > .rows2 { padding-left: 6px; }
.sel { position: relative; display: block; height: 20px; margin-right: 3px; }
.sel select { appearance: none; width: 100%; height: 20px; padding: 0 3px; border: 1px solid #5a5a5a; border-radius: 3px; background: #262626; }
.sel .chev { position: absolute; right: 1px; top: 6px; pointer-events: none; }
.w94 { width: 95px; }
.w42 { width: 42px; }
.wide { flex: 1; margin-right: 5px; }
.ml { margin: 0 4px 0 2px; }
.fmt { gap: 6px; padding-left: 3px; }
.fmt .b, .fmt .it { width: 15px; font-weight: 700; font-size: 12px; }
.fmt .it { font-weight: 400; font-style: italic; }
.u { width: 14px; font-size: 12px; line-height: 12px; text-decoration: underline; }
.sep { width: 1px; height: 20px; background: #4b4b4b; }
.halign { display: flex; padding-left: 6px; }
.al .ib { width: 21px; height: 20px; }
.al .ib:has(.chev) { width: auto; padding-left: 4px; }
.al .ib { color: #ccc; }
.pressed { border: 1px solid #8a8a8a; border-radius: 3px; background: #3a3a3a; }
.sep.tall { height: 50px; margin: 6px 8px 0 5px; }
.halign .rows2:last-child .ib { height: 21px; justify-content: flex-start; }
.num { gap: 8px; padding-left: 4px; }
.num .sep { margin: 0 -3px 0 -2px; }
.pad11 { padding-left: 11px; }
.pad10 { padding-left: 10px; }
.row { display: flex; align-items: center; gap: 3px; }
.edit { display: flex; padding-left: 10px; gap: 8px; }
.edit .rows3 { width: 32px; }
.center { display: flex; justify-content: center; gap: 10px; }
.collapse { display: grid; place-items: end center; padding-bottom: 5px; }

/* formula bar */
.formula { display: flex; align-items: center; height: 32px; padding: 0 7px; flex: none; }
.namebox, .fxbox, .fin { display: flex; align-items: center; height: 20px; border: 1px solid #454545; border-radius: 3px; background: #262626; padding: 0 2px 0 3px; }
.namebox { width: 84px; }
.namebox input, .fin input { flex: 1; }
.dots { width: 2px; height: 10px; margin: 0 8px; background: radial-gradient(circle, #ddd 1px, transparent 1px) 0 0 / 2px 4px; }
.fxbox { width: 70px; gap: 7px; padding-left: 4px; }
.fx { font: italic 15px/16px "Liberation Serif", serif; gap: 1px; }
.fin { flex: 1; margin-left: 4px; padding-left: 7px; font: 12px/14px "Roboto Condensed", Roboto, sans-serif; }

/* work area */
.work { flex: 1; display: flex; min-height: 0; background: #080809; }
.recovery { width: 223px; display: flex; flex-direction: column; padding: 9px 9px 10px 10px; font-size: 9px; line-height: 14px; }
h2 { font-size: 11px; line-height: 16px; }
.recovery p { margin: 13px 0 0 3px; }
.file { display: flex; gap: 9px; margin: 24px 0 0 8px; align-items: center; white-space: nowrap; line-height: 15px; }
.file .fs { font-size: 8px; color: #d0d0d0; }
.which { display: flex; align-items: center; gap: 6px; height: 15px; }
.which a { color: #56b883; font-size: 10px; }
.closebtn { align-self: flex-end; border: 1px solid #5a5a5a; border-radius: 3px; background: #262626; height: 20px; width: 42px; font-size: 10px; }

.sheet { flex: 1; display: flex; flex-direction: column; min-width: 0; border-left: 1px solid #3c4044; border-right: 1px solid #3c4044; }
.gridwrap { flex: 1; display: flex; min-height: 0; }
.cells { flex: 1; overflow: hidden; min-width: 0; }
table { width: 100%; border-collapse: separate; border-spacing: 0; table-layout: fixed; font: 12px/15px "Roboto Condensed", Roboto, sans-serif; color: #181818; }
.c0 { width: 22px; } .c2 { width: 64px; } .c3 { width: 276px; } .c4 { width: 207px; } .c5 { width: 99px; }
tr { height: 16px; background: #fff; }
th { padding: 0; font: 11px/15px "Open Sans", sans-serif; color: #c9c9c9; background: #08090c; text-align: left; }
tbody th { text-align: center; border-bottom: 1px solid #33363a; }
td { padding: 0 0 0 3px; white-space: nowrap; overflow: hidden; border-bottom: 1px solid #a6e39a; border-right: 1px solid #e3e8e3; }
tbody tr:nth-child(even) { background: #daf6cf; }
thead th > div { display: flex; justify-content: space-between; padding-left: 3px; height: 15px; align-items: center; }
thead th button { width: 14px; height: 14px; background: conic-gradient(from -45deg at 50% 75%, #555 90deg, #f3f4f8 0) center / 6px 5px no-repeat, #f3f4f8; }
thead .cur { background: #5a5c5c; }
.corner svg { width: 10px; height: 10px; margin-left: 10px; }
.active th { background: #6a6c6e; }
.picked { position: relative; overflow: visible; font-size: 11px; outline: 1px solid #1e7a44; outline-offset: -1px; border-color: #1e7a44; }
.picked::after { content: ""; position: absolute; right: -2px; bottom: -2px; width: 4px; height: 4px; background: #1e7a44; }
.vbar { width: 16px; display: flex; flex-direction: column; align-items: center; justify-content: space-between; padding: 4px 0 2px; background: #121316; }
.vbar svg { width: 8px; height: 6px; fill: #9a9a9a; }
.vbar i { width: 7px; height: 68px; border-radius: 4px; background: #8d8f90; margin-top: 28px; }
.sheettabs { display: flex; align-items: center; height: 25px; background: #0b111b; flex: none; }
.nav { width: 27px; height: 20px; display: grid; place-items: center; color: #a9b0b8; }
.nav:first-child { margin-left: 11px; }
.st { height: 16px; padding: 0 10px; border: 1px solid #3c4044; border-width: 0 1px; font-size: 11px; line-height: 15px; }
.st.on { background: #fff; color: #222; font-weight: 600; height: 24px; border: 0; border-radius: 3px; padding: 0 7px; margin: 0 4px 2px 28px; }
.st.on span { border-bottom: 1px solid #217346; }
.add { margin-left: 33px; }
.hbar { width: 266px; display: flex; align-items: center; justify-content: space-between; margin: 0 18px 0 9px; }
.hbar svg { width: 6px; height: 8px; fill: #9a9a9a; }
.hbar i { width: 113px; height: 7px; border-radius: 4px; background: #8d8f90; margin-right: 40px; }

.queries { width: 292px; display: flex; flex-direction: column; padding: 8px 10px 10px; }
.queries header { display: flex; align-items: center; gap: 16px; height: 20px; padding-right: 3px; }
.queries h2 { flex: 1; }
.qpanel { flex: 1; margin-top: 6px; background: #272727; border-radius: 2px; font-size: 10px; }
.qtabs { display: flex; align-items: center; height: 23px; font-size: 9px; }
.qtabs button { height: 19px; margin-top: 4px; }
.qtabs .on { font-weight: 700; border-bottom: 2px solid #fff; }
.qtabs button + button { border-left: 1px solid #777; height: 16px; margin: 0 0 0 7px; padding-left: 7px; }
.count { margin-top: 7px; height: 16px; border-bottom: 2px solid #77706c; font-size: 9px; }
.query { display: grid; grid-template-columns: 16px 1fr auto; align-items: center; margin-top: 6px; padding: 3px 3px 3px 4px; background: #268044; line-height: 18px; color: #dff5e4; }
.qn { font-size: 11px; color: #a9e0b5; }
.qs { grid-column: 2; }

/* status bar */
.status { display: flex; align-items: center; height: 20px; padding: 0 8px 0 9px; background: #151515; border-top: 1px solid #2c2c2c; font-size: 9px; flex: none; }
.acc { display: flex; align-items: center; gap: 3px; margin-left: 16px; font-weight: 600; }
.view { width: 34px; height: 19px; display: grid; place-items: center; color: #ddd; }
.zoom { display: flex; align-items: center; gap: 3px; margin: 0 8px 0 3px; }
.zoom button { color: #ccc; }
.zoom input { appearance: none; width: 84px; height: 10px; background: linear-gradient(#8a8a8a, #8a8a8a) center / 100% 1px no-repeat; }
.zoom input::-webkit-slider-thumb { appearance: none; width: 4px; height: 10px; background: #ccc; }

/* taskbar */
.taskbar { display: grid; grid-template-columns: 1fr auto 1fr; align-items: center; height: 39px; flex: none; color: #222; background: linear-gradient(100deg, #ececec 18%, #dce3f0 20%, #e8e7f1 36%, #e6e6f0 60%, #dfe3ea 76%, #ececee 78%); }
.apps { grid-column: 2; display: flex; align-items: center; gap: 6px; padding-left: 4px; }
.apps button { width: 30px; height: 32px; display: grid; place-items: center; align-content: center; position: relative; }
.apps button svg { width: 20px; height: 20px; }
.apps button:first-child { width: 20px; }
.tsearch { display: flex; align-items: center; gap: 9px; width: 181px; height: 25px; border-radius: 13px; background: #f8fafc; padding: 0 10px; margin-left: 5px; }
.tsearch input { flex: 1; }
.tsearch input::placeholder { color: #666; opacity: 1; }
.apps .running { background: #fafafd; border-radius: 3px; }
.running::after, .idle::after { content: ""; position: absolute; bottom: 0; width: 13px; height: 2px; border-radius: 1px; background: #1878b8; }
.idle::after { width: 5px; background: #8a8a8a; }
.tray { display: flex; align-items: center; justify-content: flex-end; gap: 13px; padding-right: 16px; font-size: 10px; }
.sys { display: flex; gap: 6px; }
time { text-align: right; line-height: 13px; }
```
